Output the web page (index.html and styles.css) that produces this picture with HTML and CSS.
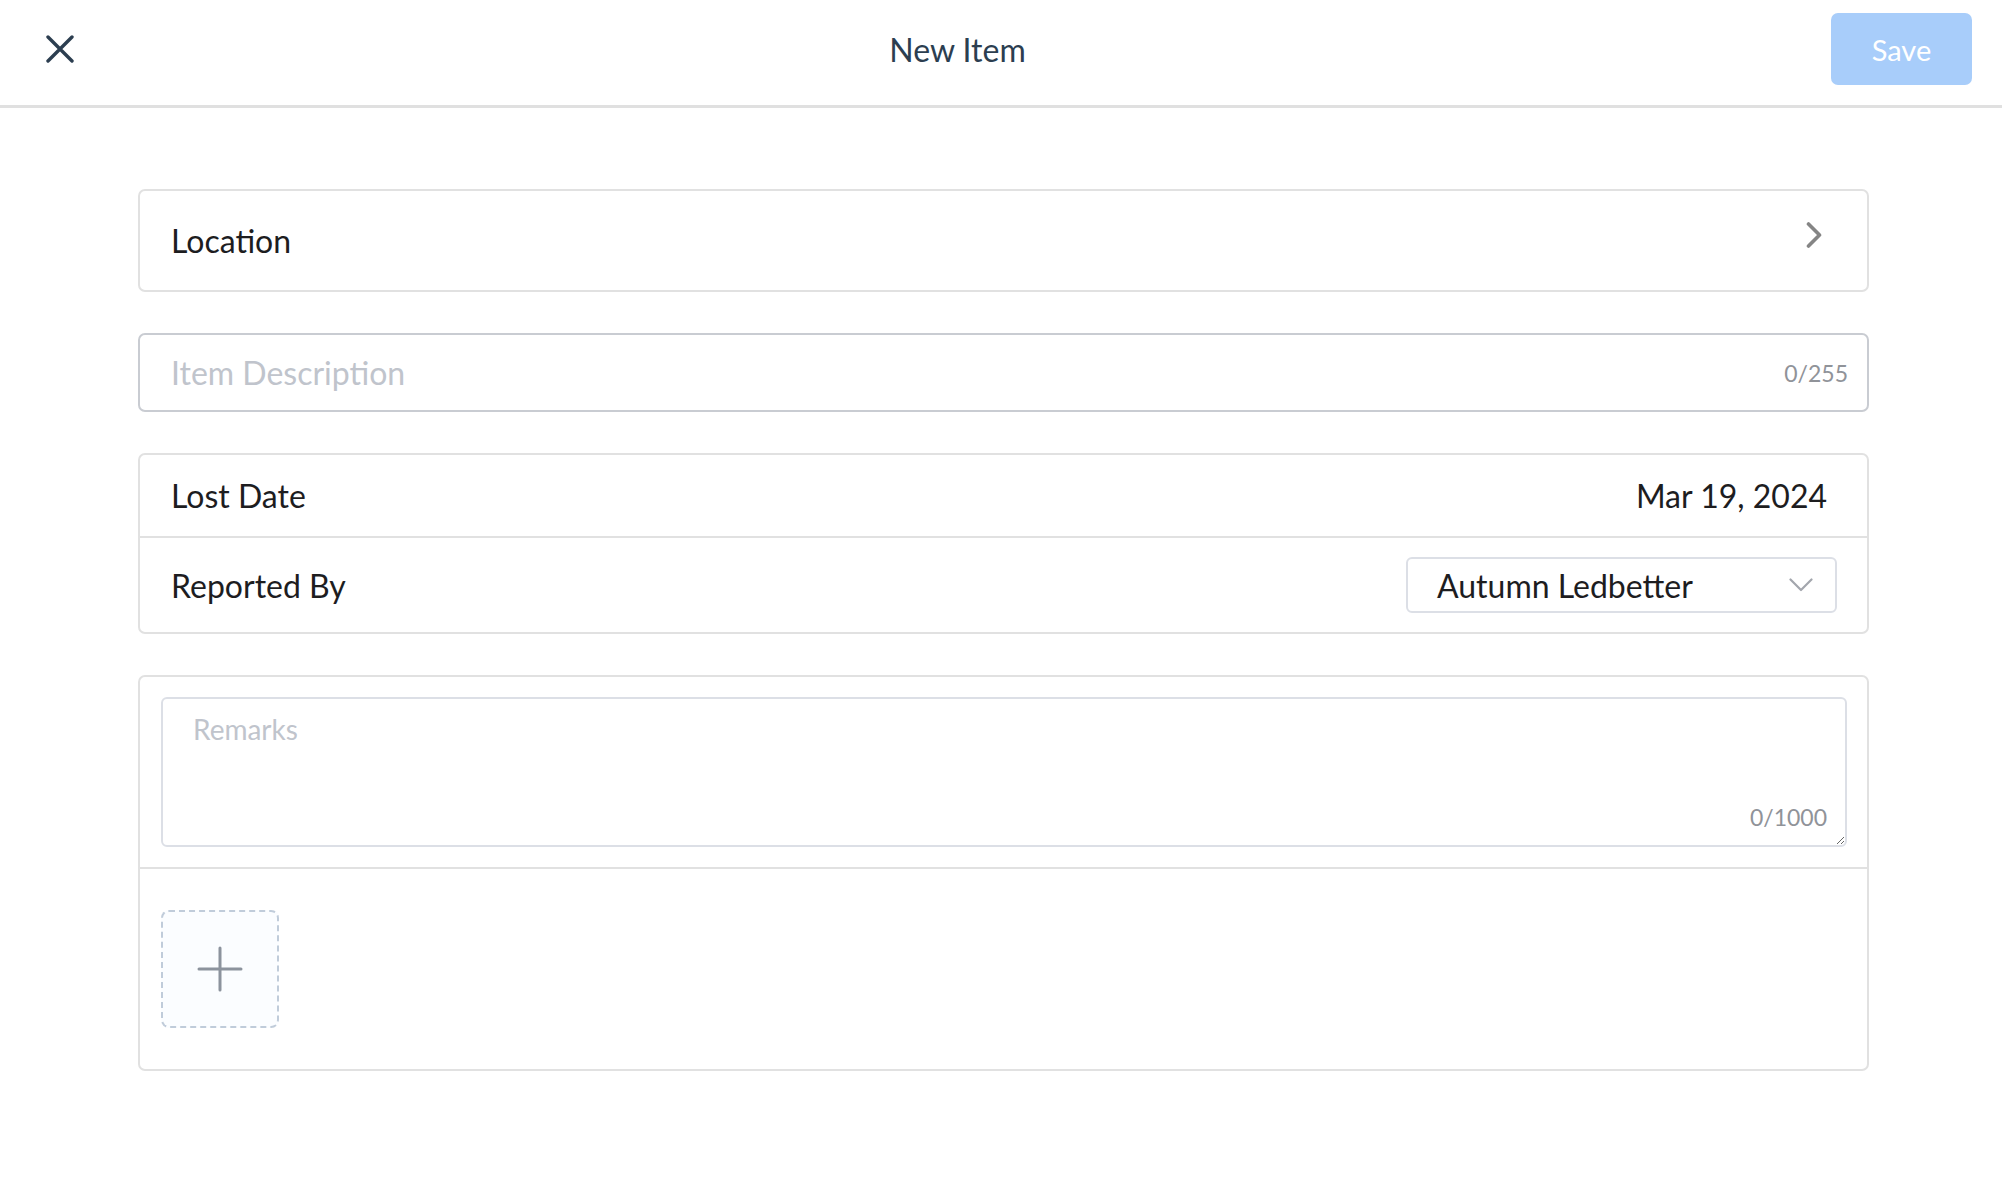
FILE: index.html
```html
<!DOCTYPE html>
<html lang="en">
<head>
<meta charset="utf-8">
<title>New Item</title>
<link rel="stylesheet" href="styles.css">
</head>
<body>
<header class="topbar">
  <button class="close-btn" aria-label="Close">
    <svg width="28" height="28" viewBox="0 0 28 28"><path d="M2 2 L26 26 M26 2 L2 26" stroke="#2c3e50" stroke-width="3.4" stroke-linecap="round" fill="none"/></svg>
  </button>
  <h1 class="title">New Item</h1>
  <button class="save-btn" disabled>Save</button>
</header>

<main class="form">
  <div class="card nav-row">
    <span class="label">Location</span>
    <svg class="chev-right" width="16" height="28" viewBox="0 0 16 28"><path d="M2.5 3 L13.5 14 L2.5 25" stroke="#858585" stroke-width="3.6" stroke-linecap="round" stroke-linejoin="round" fill="none"/></svg>
  </div>

  <div class="text-input">
    <input type="text" placeholder="Item Description">
    <span class="counter">0/255</span>
  </div>

  <div class="card group">
    <div class="row row-date">
      <span class="label">Lost Date</span>
      <span class="value">Mar 19, 2024</span>
    </div>
    <div class="row row-select">
      <span class="label">Reported By</span>
      <div class="select">
        <span class="select-value">Autumn Ledbetter</span>
        <svg width="24" height="14" viewBox="0 0 24 14"><path d="M1.5 1.5 L12 12 L22.5 1.5" stroke="#a3a6ad" stroke-width="2.2" stroke-linecap="round" stroke-linejoin="round" fill="none"/></svg>
      </div>
    </div>
  </div>

  <div class="card remarks-card">
    <div class="remarks-wrap">
      <textarea class="remarks" placeholder="Remarks"></textarea>
      <span class="counter counter-area">0/1000</span>
    </div>
    <div class="uploads">
      <div class="upload-box">
        <svg width="46" height="46" viewBox="0 0 46 46"><path d="M23 2 V44 M2 23 H44" stroke="#8c939d" stroke-width="3" stroke-linecap="round" fill="none"/></svg>
      </div>
    </div>
  </div>
</main>
</body>
</html>
```

FILE: styles.css
```css
* { box-sizing: border-box; }

html, body {
  margin: 0;
  padding: 0;
  background: #ffffff;
  font-family: Lato, "Noto Sans", "Liberation Sans", sans-serif;
  color: #1d1d1f;
}

.topbar {
  display: flex;
  align-items: center;
  justify-content: space-between;
  height: 108px;
  padding: 0 30px 7px 46px;
  border-bottom: 3px solid #e0e0e0;
}

.close-btn {
  width: 38px;
  height: 28px;
  padding: 0;
  border: 0;
  background: none;
  display: flex;
  align-items: center;
  justify-content: flex-start;
  cursor: pointer;
}

.title {
  margin: 0;
  font-size: 32px;
  font-weight: 400;
  color: #2c3e50;
}

.save-btn {
  width: 141px;
  height: 72px;
  border: 0;
  border-radius: 7px;
  background: #a8cdfa;
  color: #ffffff;
  font-family: inherit;
  font-size: 29px;
  padding: 0;
}

.form {
  width: 1731px;
  margin-left: 138px;
  padding-top: 81px;
  display: flex;
  flex-direction: column;
  gap: 41px;
}

.card {
  border: 2px solid #e1e1e1;
  border-radius: 7px;
  background: #fff;
}

.label {
  font-size: 32px;
  color: #1d1d1f;
}

.nav-row {
  height: 103px;
  display: flex;
  align-items: center;
  justify-content: space-between;
  padding: 0 45px 0 31px;
}

.chev-right {
  margin-bottom: 11px;
}

.text-input {
  position: relative;
  height: 79px;
}

.text-input input {
  width: 100%;
  height: 100%;
  border: 2px solid #c9ccd2;
  border-radius: 7px;
  padding: 0 100px 0 31px;
  font-family: inherit;
  font-size: 32px;
  color: #1d1d1f;
  outline: none;
}

.text-input input::placeholder,
.remarks::placeholder {
  color: #c0c4cc;
}

.counter {
  position: absolute;
  right: 21px;
  top: 50%;
  transform: translateY(-50%);
  font-size: 23px;
  color: #909399;
}

.group .row {
  display: flex;
  align-items: center;
  justify-content: space-between;
  padding-left: 31px;
}

.row-date {
  height: 83px;
  padding-right: 40px;
  border-bottom: 2px solid #e1e1e1;
}

.value {
  font-size: 32px;
  color: #1d1d1f;
}

.row-select {
  height: 94px;
  padding-right: 30px;
}

.select {
  width: 431px;
  height: 56px;
  border: 2px solid #dcdfe6;
  border-radius: 6px;
  display: flex;
  align-items: center;
  justify-content: space-between;
  padding: 0 22px 0 29px;
}

.select-value {
  font-size: 32px;
  color: #1d1d1f;
}

.remarks-card {
  display: flex;
  flex-direction: column;
}

.remarks-wrap {
  position: relative;
  padding: 20px 20px 20px 21px;
  border-bottom: 2px solid #e1e1e1;
}

.remarks {
  display: block;
  width: 100%;
  height: 150px;
  border: 2px solid #dcdfe6;
  border-radius: 6px;
  padding: 9px 30px;
  font-family: inherit;
  font-size: 28px;
  line-height: 1.5;
  color: #1d1d1f;
  resize: vertical;
  outline: none;
}

.counter-area {
  top: auto;
  transform: none;
  right: 40px;
  bottom: 36px;
}

.uploads {
  padding: 41px 21px 41px;
}

.upload-box {
  width: 118px;
  height: 118px;
  border: 2px dashed #c0ccda;
  border-radius: 8px;
  background: #fbfdff;
  display: flex;
  align-items: center;
  justify-content: center;
}
```
